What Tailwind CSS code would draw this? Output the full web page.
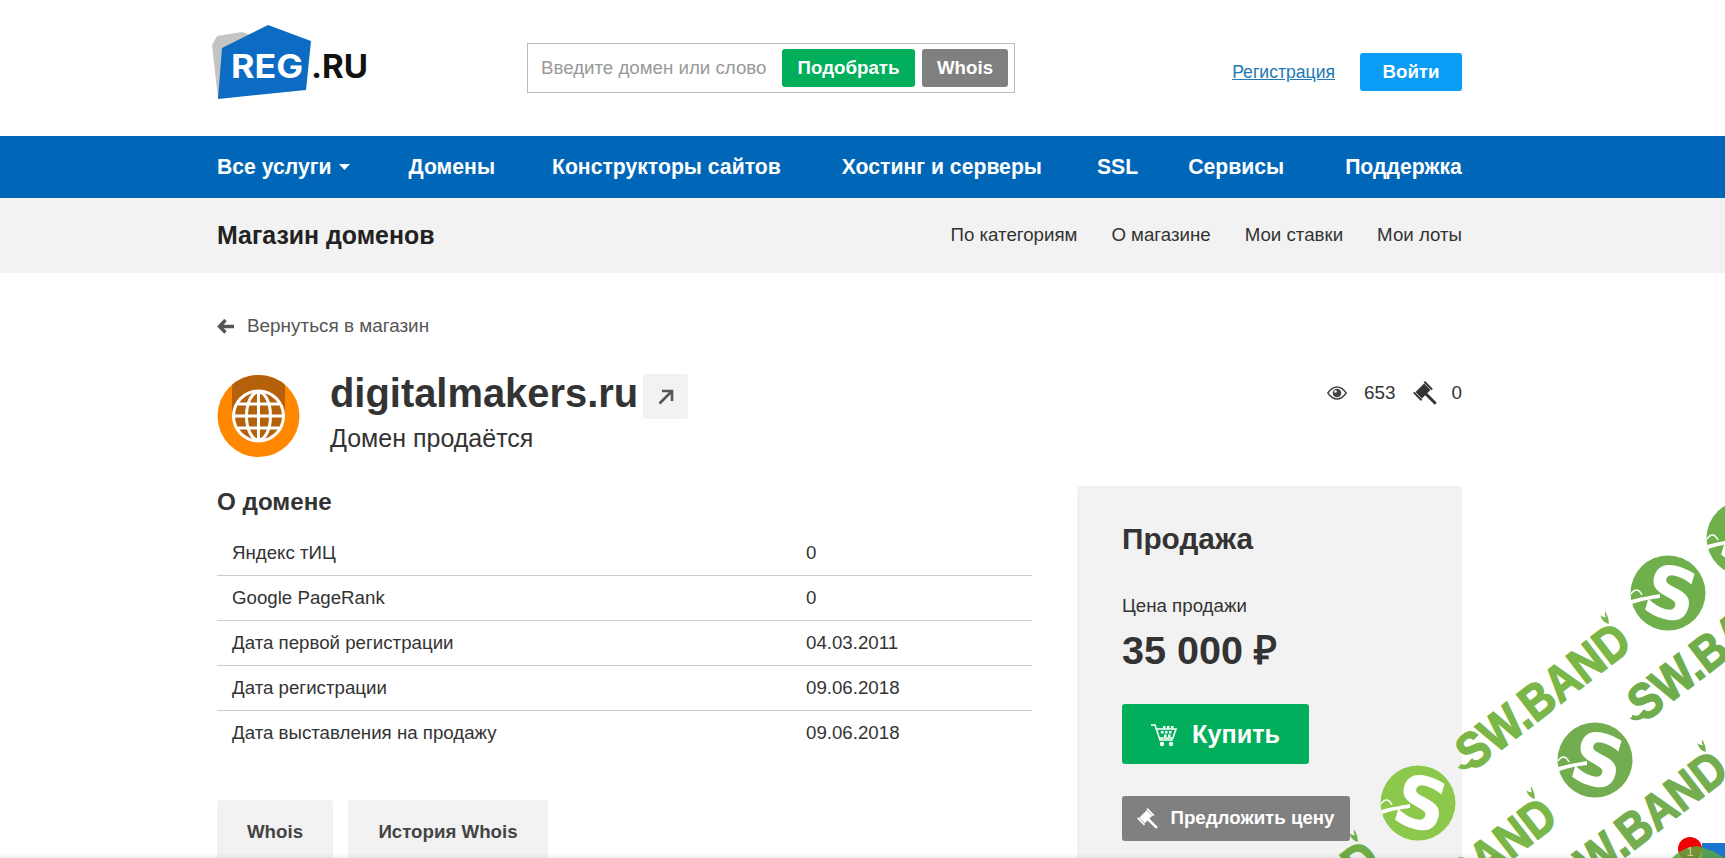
<!DOCTYPE html>
<html lang="ru">
<head>
<meta charset="utf-8">
<title>digitalmakers.ru</title>
<script src="https://cdn.jsdelivr.net/npm/@tailwindcss/browser@4"></script>
</head>
<body class="m-0 bg-white">
<div class="relative w-[1725px] h-[858px] overflow-hidden bg-white text-[#333] font-['Liberation_Sans',Arial,sans-serif]">

  <header class="h-[136px] pl-[209px] w-[1462px] flex items-center">
    <svg class="w-[162px] h-[80px] shrink-0 mb-[12px]" viewBox="209 22 162 80">
      <path d="M212 45 L217 36 L242 32 L260 38 L218 99 Z" fill="#c4c4c4"/>
      <path d="M218 99 L222 48 L268 25 L311 41 L306 90 Z" fill="#0c6cc4"/>
      <text x="231" y="78" font-family="Inter" font-weight="700" font-size="32" fill="#fff" textLength="72" lengthAdjust="spacingAndGlyphs">REG</text>
      <text x="311" y="78" font-family="Inter" font-weight="700" font-size="32" fill="#111" textLength="57" lengthAdjust="spacingAndGlyphs">.RU</text>
    </svg>
    <div class="ml-[156px] w-[488px] h-[50px] border border-[#bbb] flex items-center pl-[13px] pr-[5px] shrink-0">
      <span class="text-[18.7px] text-[#999] w-[241px] whitespace-nowrap">Введите домен или слово</span>
      <span class="w-[133px] h-[38px] rounded-[3px] bg-[#00ae5c] text-white font-bold text-[18.7px] flex items-center justify-center">Подобрать</span>
      <span class="ml-[7px] w-[86px] h-[38px] rounded-[3px] bg-[#808080] text-white font-bold text-[18.7px] flex items-center justify-center">Whois</span>
    </div>
    <div class="ml-auto mt-2 flex items-center">
      <a class="text-[17.6px] text-[#2279b5] underline whitespace-nowrap">Регистрация</a>
      <span class="ml-[25px] w-[102px] h-[38px] rounded-[3px] bg-[#0a9df5] text-white font-bold text-[18.7px] flex items-center justify-center">Войти</span>
    </div>
  </header>

  <nav class="h-[62px] bg-[#0067b8] text-white font-bold text-[21.2px] pl-[217px] flex items-center whitespace-nowrap">
    <span>Все услуги</span>
    <svg class="ml-[7px] w-[11px] h-[6px]" viewBox="0 0 11 6"><path d="M0 0h11L5.500 6z" fill="#fff"/></svg>
    <span class="ml-[59px]">Домены</span>
    <span class="ml-[57px]">Конструкторы сайтов</span>
    <span class="ml-[61px]">Хостинг и серверы</span>
    <span class="ml-[55px]">SSL</span>
    <span class="ml-[50px]">Сервисы</span>
    <span class="ml-[61px]">Поддержка</span>
  </nav>

  <div class="h-[75px] bg-[#f2f2f2] pl-[217px] w-full flex items-center whitespace-nowrap">
    <div class="w-[1245px] flex items-center">
      <span class="font-bold text-[24.9px] text-[#222]">Магазин доменов</span>
      <div class="ml-auto flex gap-[34px] text-[18.7px] text-[#333]">
        <span>По категориям</span><span>О магазине</span><span>Мои ставки</span><span>Мои лоты</span>
      </div>
    </div>
  </div>

  <main class="pl-[217px] w-[1462px]">
    <div class="mt-[43px] h-[20px] flex items-center text-[18.9px] text-[#555]">
      <svg class="w-[17px] h-[15px]" viewBox="0 0 17 15"><path d="M8.500 1 2.500 7.500l6 6M3 7.500H17" fill="none" stroke="#555" stroke-width="3.400"/></svg>
      <span class="ml-[13px]">Вернуться в магазин</span>
    </div>

    <div class="mt-[38px] h-[112px] flex items-start">
      <svg class="w-[83px] h-[82px] mt-px shrink-0" viewBox="0 0 83 82">
        <defs><clipPath id="ic"><circle cx="41.500" cy="41" r="41"/></clipPath></defs>
        <circle cx="41.500" cy="41" r="41" fill="#ff8800"/>
        <rect x="15" y="0" width="53" height="41" fill="#b5610c" clip-path="url(#ic)"/>
        <circle cx="41.500" cy="41" r="26.500" fill="#fff"/>
        <circle cx="41.500" cy="41" r="23.500" fill="#b5610c"/>
        <g fill="none" stroke="#fff" stroke-width="3">
          <ellipse cx="41.500" cy="41" rx="12" ry="24"/>
          <path d="M41.500 16v50M17 41h49M21 29h41M21 53h41"/>
        </g>
      </svg>
      <div class="ml-[30px]">
        <div class="flex items-start">
          <span class="font-bold text-[39.9px] leading-[38px] text-[#333]">digitalmakers.ru</span>
          <span class="ml-[5px] w-[45px] h-[45px] bg-[#f2f2f2] rounded-[2px] flex items-center justify-center">
            <svg class="w-[16px] h-[16px]" viewBox="0 0 16 16"><path d="M1.500 14.500 13 3M4 2h10v10" fill="none" stroke="#555" stroke-width="2.600"/></svg>
          </span>
        </div>
        <div class="mt-[4px] text-[25px] leading-[30px] text-[#333]">Домен продаётся</div>
      </div>
      <div class="ml-auto mt-[9px] h-[20px] flex items-center text-[18.9px] text-[#333]">
        <svg class="w-[20px] h-[14px]" viewBox="0 0 20 14"><path d="M.8 7C4 2.500 7 1 10 1s6 1.500 9.200 6C16 11.500 13 13 10 13S4 11.500.8 7z" fill="none" stroke="#444" stroke-width="1.400"/><circle cx="10" cy="7" r="4.300" fill="#444"/><circle cx="8.500" cy="5.500" r="1.300" fill="#fff"/></svg>
        <span class="ml-[17px]">653</span>
        <svg class="ml-[18px] w-[24px] h-[24px]" viewBox="0 0 24 24"><g transform="translate(10 10) rotate(45)" fill="#333"><rect x="0" y="-1.500" width="18" height="3"/><rect x="-4.500" y="-6" width="9" height="12"/><rect x="-5.500" y="-8.500" width="11" height="2"/><rect x="-5.500" y="6.500" width="11" height="2"/></g></svg>
        <span class="ml-[14px]">0</span>
      </div>
    </div>

    <div class="flex items-start">
      <section class="w-[815px]">
        <h2 class="h-[32px] font-bold text-[24.2px] leading-[32px] text-[#333]">О домене</h2>
        <div class="mt-[13px] text-[18.7px] text-[#333]">
          <div class="h-[45px] grid grid-cols-[574px_1fr] items-center pl-[15px] border-b border-[#ccc]"><span>Яндекс тИЦ</span><span>0</span></div>
          <div class="h-[45px] grid grid-cols-[574px_1fr] items-center pl-[15px] border-b border-[#ccc]"><span>Google PageRank</span><span>0</span></div>
          <div class="h-[45px] grid grid-cols-[574px_1fr] items-center pl-[15px] border-b border-[#ccc]"><span>Дата первой регистрации</span><span>04.03.2011</span></div>
          <div class="h-[45px] grid grid-cols-[574px_1fr] items-center pl-[15px] border-b border-[#ccc]"><span>Дата регистрации</span><span>09.06.2018</span></div>
          <div class="h-[45px] grid grid-cols-[574px_1fr] items-center pl-[15px]"><span>Дата выставления на продажу</span><span>09.06.2018</span></div>
        </div>
        <div class="mt-[44px] flex gap-[15px] text-[18.7px] font-bold text-[#444]">
          <span class="w-[116px] h-[70px] pt-[18px] text-center rounded-t-[4px] bg-[#f2f2f2]">Whois</span>
          <span class="w-[200px] h-[70px] pt-[18px] text-center rounded-t-[4px] bg-[#f2f2f2]">История Whois</span>
        </div>
      </section>

      <aside class="ml-[45px] w-[385px] h-[400px] bg-[#f2f2f2] rounded-t-[4px] pt-[35px] pl-[45px] text-[#333]">
        <div class="h-[36px] font-bold text-[29.8px] leading-[36px]">Продажа</div>
        <div class="mt-[37px] h-[24px] text-[18.7px] leading-[24px]">Цена продажи</div>
        <div class="mt-[10px] h-[44px] font-bold text-[39.600px] leading-[44px]">35 000 ₽</div>
        <div class="mt-[32px] w-[187px] h-[60px] rounded-[3px] bg-[#00ae5c] text-white font-bold text-[25.2px] pt-px flex items-center justify-center">
          <svg class="w-[26px] h-[24px] mr-[15px]" viewBox="0 0 26 24"><g fill="none" stroke="#fff" stroke-width="1.600"><path d="M0 2h4l5 15h13"/><path d="M5 6h20l-3 9H9"/></g><circle cx="11" cy="21" r="2.200" fill="#fff"/><circle cx="20" cy="21" r="2.200" fill="#fff"/><g fill="#fff"><rect x="12" y="3" width="2.500" height="2.500"/><rect x="16" y="3" width="2.500" height="2.500"/><rect x="20" y="3" width="2.500" height="2.500"/><rect x="10" y="8" width="2.500" height="2.500"/><rect x="14" y="8" width="2.500" height="2.500"/><rect x="18" y="8" width="2.500" height="2.500"/><rect x="13" y="11.500" width="2.500" height="2.500"/><rect x="17" y="11.500" width="2.500" height="2.500"/></g></svg>
          Купить
        </div>
        <div class="mt-[32px] w-[228px] h-[45px] rounded-[3px] bg-[#808080] text-white font-bold text-[18.7px] flex items-center justify-center whitespace-nowrap">
          <svg class="w-[21px] h-[21px] mr-[12px]" viewBox="0 0 24 24"><g transform="translate(10 10) rotate(45)" fill="#fff"><rect x="0" y="-1.500" width="18" height="3"/><rect x="-4.500" y="-6" width="9" height="12"/><rect x="-5.500" y="-8.500" width="11" height="2"/><rect x="-5.500" y="6.500" width="11" height="2"/></g></svg>
          Предложить цену
        </div>
      </aside>
    </div>
  </main>

  <svg class="absolute left-0 top-0 pointer-events-none" width="1725" height="858" viewBox="0 0 1725 858">
    <defs>
      <g id="coin">
        <circle r="37.500"/>
        <text x="3" y="25" text-anchor="middle" font-family="DejaVu Sans" font-weight="700" font-size="72" fill="#fff" transform="rotate(16)">S</text>
        <path d="M-37 7C-26 4-18 3-8 1L-8 5C-18 6-28 8-36 11Z" fill="#fff"/>
        <path d="M-37 1C-33 -5-29 -4-26 2" fill="none" stroke="#fff" stroke-width="1.500"/>
      </g>
      <g id="band">
        <text x="0" y="17" text-anchor="middle" font-family="Liberation Sans" font-weight="700" font-size="50" stroke-width="1.600" textLength="204" lengthAdjust="spacingAndGlyphs">SW.BAND</text>
        <path stroke="none" d="M-98 8c-4 0-7-1-9-5c-1 2-2 2-4 1c1 4 4 8 13 9zM96-17c3-3 4-7 5-12c-2 1-3 3-3 5c-2-1-3-3-3-5c-2 3-2 8 1 12z"/>
      </g>
    </defs>
    <use href="#coin" x="1668" y="593" fill="#6fb04c"/>
    <use href="#coin" x="1595" y="760" fill="#72ae4f"/>
    <use href="#coin" x="1418" y="803" fill="#8cc84b"/>
    <use href="#coin" x="1744" y="538" fill="#6fb04c"/>
    <g fill="#7ab648" stroke="#7ab648" transform="translate(1543 696) rotate(-37.6)"><use href="#band"/></g>
    <g fill="#70ad4c" stroke="#70ad4c" transform="translate(1715 647) rotate(-37.6)"><use href="#band"/></g>
    <g fill="#74ae50" stroke="#74ae50" transform="translate(1640 824) rotate(-37.6)"><use href="#band"/></g>
    <g fill="#7ab648" stroke="#7ab648" transform="translate(1469 871) rotate(-37.6)"><use href="#band"/></g>
    <g fill="#6fad45" stroke="#6fad45" transform="translate(1292 914) rotate(-37.6)"><use href="#band"/></g>
    <rect x="1702" y="843" width="23" height="15" fill="#1b76d2"/>
    <circle cx="1690" cy="849" r="12" fill="#f00000"/>
    <path d="M1672 858C1680 850 1695 843 1703 848C1712 850 1722 856 1725 858Z" fill="#5ea93f" opacity="0.85"/>
    <text x="1690" y="856" text-anchor="middle" font-family="Liberation Sans" font-size="13" fill="#cfd08a">1</text>
  </svg>
  <div class="absolute left-0 right-0 bottom-0 h-[6px] bg-linear-to-t from-black/5 to-transparent"></div>
</div>
</body>
</html>
